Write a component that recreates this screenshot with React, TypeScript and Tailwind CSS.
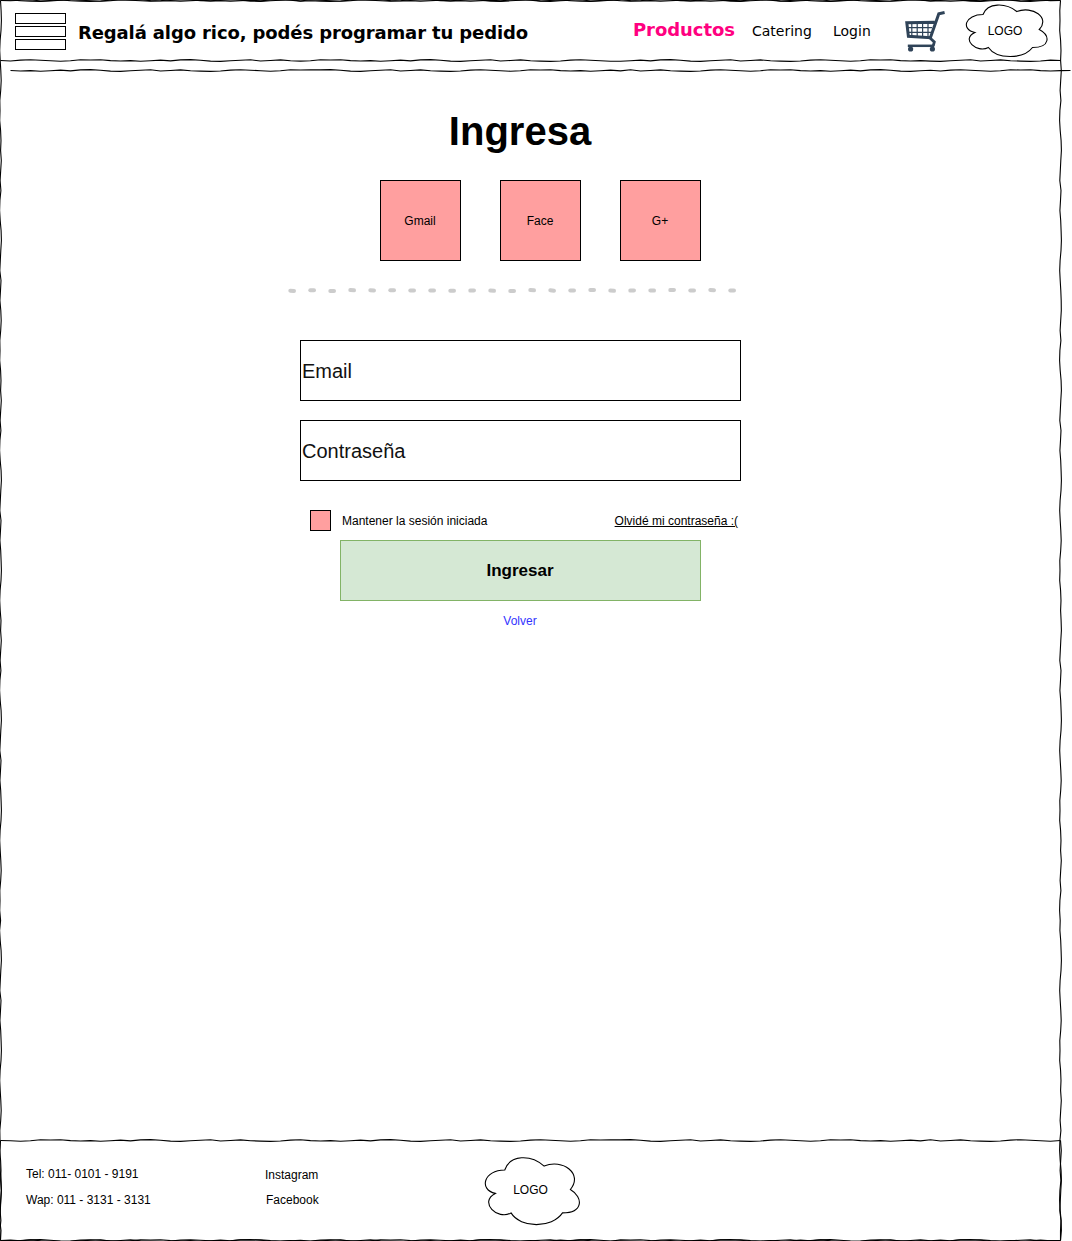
import React from "react";

const WOBBLE = [0, -0.6, 0.2, 0.6, 0.9, 0.5, -0.4, -0.8, -0.3, 0.3, 0.7, 0.2, -0.7, -0.5, -0.8, 0.1, 0.5, 0.1, 0.8, 0.2, -0.4, 0.4, -0.6, -0.9, -0.3, 0.6, 0.9, 0.3, -0.2, -0.7, 0.5];

// Hand-drawn stroke made of ten pixel segments that drift around a straight axis.
function sketchPath(length: number, seed: number, vertical: boolean) {
  const steps = Math.round(length / 10);
  const points: string[] = [];
  for (let i = 0; i <= steps; i++) {
    const edge = i === 0 || i === steps;
    const drift = edge ? 0 : WOBBLE[(i + seed + Math.floor(i / 31) * 7) % WOBBLE.length];
    const along = i * 10 + 0.5;
    const across = 2.5 + drift;
    points.push(vertical ? `${across} ${along}` : `${along} ${across}`);
  }
  return "M" + points.join("L");
}

function SketchLine({ length, seed, vertical = false, className = "" }: { length: number; seed: number; vertical?: boolean; className?: string }) {
  const width = vertical ? 5 : length + 1;
  const height = vertical ? length + 1 : 5;
  return (
    <svg width={width} height={height} className={"pointer-events-none block overflow-hidden " + className} aria-hidden="true">
      <path d={sketchPath(length, seed, vertical)} fill="none" stroke="#000" strokeWidth="1.1" />
    </svg>
  );
}

function Cloud({ w, h, labelClass = "" }: { w: number; h: number; labelClass?: string }) {
  const p = (x: number, y: number) => `${x * w + 0.5} ${y * h + 0.5}`;
  const d = [
    `M${p(0.25, 0.25)}`,
    `C${p(0.05, 0.25)} ${p(0, 0.5)} ${p(0.16, 0.55)}`,
    `C${p(0, 0.66)} ${p(0.18, 0.9)} ${p(0.31, 0.8)}`,
    `C${p(0.4, 1)} ${p(0.7, 1)} ${p(0.8, 0.8)}`,
    `C${p(1, 0.8)} ${p(1, 0.6)} ${p(0.875, 0.5)}`,
    `C${p(1, 0.3)} ${p(0.8, 0.1)} ${p(0.625, 0.2)}`,
    `C${p(0.5, 0.05)} ${p(0.3, 0.05)} ${p(0.25, 0.25)}Z`,
  ].join("");
  return (
    <div className="grid place-items-center">
      <svg width={w} height={h} className="col-start-1 row-start-1 block">
        <path d={d} fill="#fff" stroke="#000" strokeWidth="1.1" />
      </svg>
      <span className={"col-start-1 row-start-1 text-xs leading-4 " + labelClass}>LOGO</span>
    </div>
  );
}

function Cart() {
  return (
    <svg width="42" height="42" viewBox="904 11 42 42" fill="none" stroke="#2f4358">
      <path d="M944.6 12.5L938.8 13.8L930.4 37.8L908.4 36.3L906.8 22.8L934.5 22.2" strokeWidth="3" />
      <path d="M911.8 23V37M917.2 23V37M922.6 23V37M928 23V37M907 27.6H932M908 32.4H931" strokeWidth="1.2" />
      <path d="M930 38L934.3 42L933.3 45.6" strokeWidth="2.8" />
      <path d="M907.8 45.8H934.3" strokeWidth="2.5" />
      <circle cx="910.6" cy="49" r="2.6" fill="#2f4358" stroke="none" />
      <circle cx="932.4" cy="49" r="2.6" fill="#2f4358" stroke="none" />
    </svg>
  );
}

const DASHES = [0.4, -0.1, 0.7, -0.2, 0, -0.1, 0.1, 0, 0.3, 0.1, 0.3, 0.5, -0.2, 0.1, 0, -0.3, 0.3, 0.1, 0.1, -0.4, 0.1, -0.3, 0.2];
const TILTS = [0.1, 0, 0, 0.1, 0.2, 0, 0, 0, 0, -0.1, 0.1, 0, 0.1, 0.2, 0, 0, 0.1, -0.1, 0.1, -0.1, 0, 0.2, 0];

function Dashes() {
  return (
    <svg width="450" height="8" className="ml-[288px] mt-[25px] block" aria-hidden="true">
      {DASHES.map((dy, i) => (
        <path key={i} d={`M${i * 20 + 2.3} ${4.4 + dy - TILTS[i]}L${i * 20 + 6} ${4.4 + dy + TILTS[i]}`} stroke="#ccc" strokeWidth="4" strokeLinecap="round" />
      ))}
    </svg>
  );
}

function Social({ label }: { label: string }) {
  return (
    <button className="flex size-[81px] items-center justify-center border border-black bg-[#ff9f9f] pr-px text-xs">{label}</button>
  );
}

export default function App() {
  return (
    <div className="h-[1241px] w-[1072px] overflow-hidden bg-white font-['Liberation_Sans',Arial,sans-serif] text-black">
      <div className="relative flex h-[1241px] w-[1061px] flex-col">
        <header className="relative flex h-[61px] shrink-0 items-start font-['DejaVu_Sans',Verdana,sans-serif]">
          <div className="ml-[15px] mt-[13px] flex flex-col gap-[2px]">
            <div className="h-[11px] w-[51px] border border-black" />
            <div className="h-[11px] w-[51px] border border-black" />
            <div className="h-[11px] w-[51px] border border-black" />
          </div>
          <div className="ml-3 mt-[23px] w-[555px] whitespace-nowrap text-lg font-bold leading-5 tracking-[-0.12px]">
            <span>Regalá algo rico, podés programar tu pedido</span>
          </div>
          <nav className="mt-5 flex whitespace-nowrap leading-5">
            <a className="w-[119px] text-lg font-bold leading-5 tracking-[-0.07px] text-[#ff0080]">Productos</a>
            <a className="mt-px w-[81px] text-sm leading-5">Catering</a>
            <a className="mt-px w-[71px] text-sm leading-5">Login</a>
          </nav>
          <div className="mt-[11px] w-[56px] shrink-0"><Cart /></div>
          <div className="-mt-px shrink-0 font-['Liberation_Sans',Arial,sans-serif]"><Cloud w={90} h={60} labelClass="mt-1" /></div>
          <SketchLine length={1060} seed={26} className="absolute -top-[2px] left-0" />
          <SketchLine length={1060} seed={4} className="absolute left-0 top-[58px]" />
        </header>
        <SketchLine length={1060} seed={15} className="ml-[10px] mt-[7px] shrink-0" />

        <main className="flex flex-1 flex-col">
          <h1 className="mt-[34px] w-[1040px] text-center text-[40px] font-bold leading-[48px]">Ingresa</h1>
          <div className="ml-[380px] mt-[25px] flex gap-[39px]">
            <Social label="Gmail" />
            <Social label="Face" />
            <Social label="G+" />
          </div>
          <Dashes />
          <form className="ml-[300px] mt-[46px] flex w-[441px] flex-col">
            <input aria-label="Email" placeholder="Email" className="h-[61px] border border-black px-px pt-[2px] text-xl outline-none placeholder:text-[#111] placeholder:opacity-100" />
            <input aria-label="Contraseña" placeholder="Contraseña" className="mt-[19px] h-[61px] border border-black px-px pt-[2px] text-xl outline-none placeholder:text-[#111] placeholder:opacity-100" />
            <div className="mt-[29px] flex h-[21px] items-center justify-between pl-[10px] pr-[3px] text-xs">
              <label className="flex items-center">
                <span className="mr-[11px] size-[21px] border border-black bg-[#ff9f9f]" />
                <span>Mantener la sesión iniciada</span>
              </label>
              <a className="underline">Olvidé mi contraseña :(</a>
            </div>
            <button type="button" className="ml-10 mt-[9px] h-[61px] w-[361px] border border-[#82b366] bg-[#d5e8d4] pr-px text-[17px] font-bold">Ingresar</button>
            <a className="mt-3 pr-px text-center text-xs leading-4 text-[#3333ff]">Volver</a>
          </form>
        </main>

        <footer className="relative flex h-[101px] shrink-0 items-start text-xs leading-4">
          <SketchLine length={1060} seed={8} className="absolute -top-[2px] left-0" />
          <SketchLine length={100} seed={17} vertical className="absolute -right-[2px] top-0" />
          <SketchLine length={100} seed={21} vertical className="absolute -left-[2px] top-0" />
          <SketchLine length={1060} seed={29} className="absolute -bottom-[2px] left-0" />
          <div className="mt-[26px] flex w-[239px] flex-col gap-[10px] pl-[26px]">
            <span>Tel: 011- 0101 - 9191</span>
            <span>Wap: 011 - 3131 - 3131</span>
          </div>
          <div className="mt-[27px] flex w-[239px] flex-col gap-[9px] pl-[26px]">
            <span>Instagram</span>
            <span className="pl-px">Facebook</span>
          </div>
          <div className="mt-[10px]"><Cloud w={105} h={78} labelClass="mt-[2px]" /></div>
        </footer>

        <SketchLine length={1060} seed={0} className="absolute -top-[2px] left-0" />
        <SketchLine length={1060} seed={19} className="absolute bottom-[-2px] left-0" />
        <SketchLine length={1240} seed={2} vertical className="absolute -left-[2px] top-0" />
        <SketchLine length={1240} seed={11} vertical className="absolute -right-[2px] top-0" />
      </div>
    </div>
  );
}
